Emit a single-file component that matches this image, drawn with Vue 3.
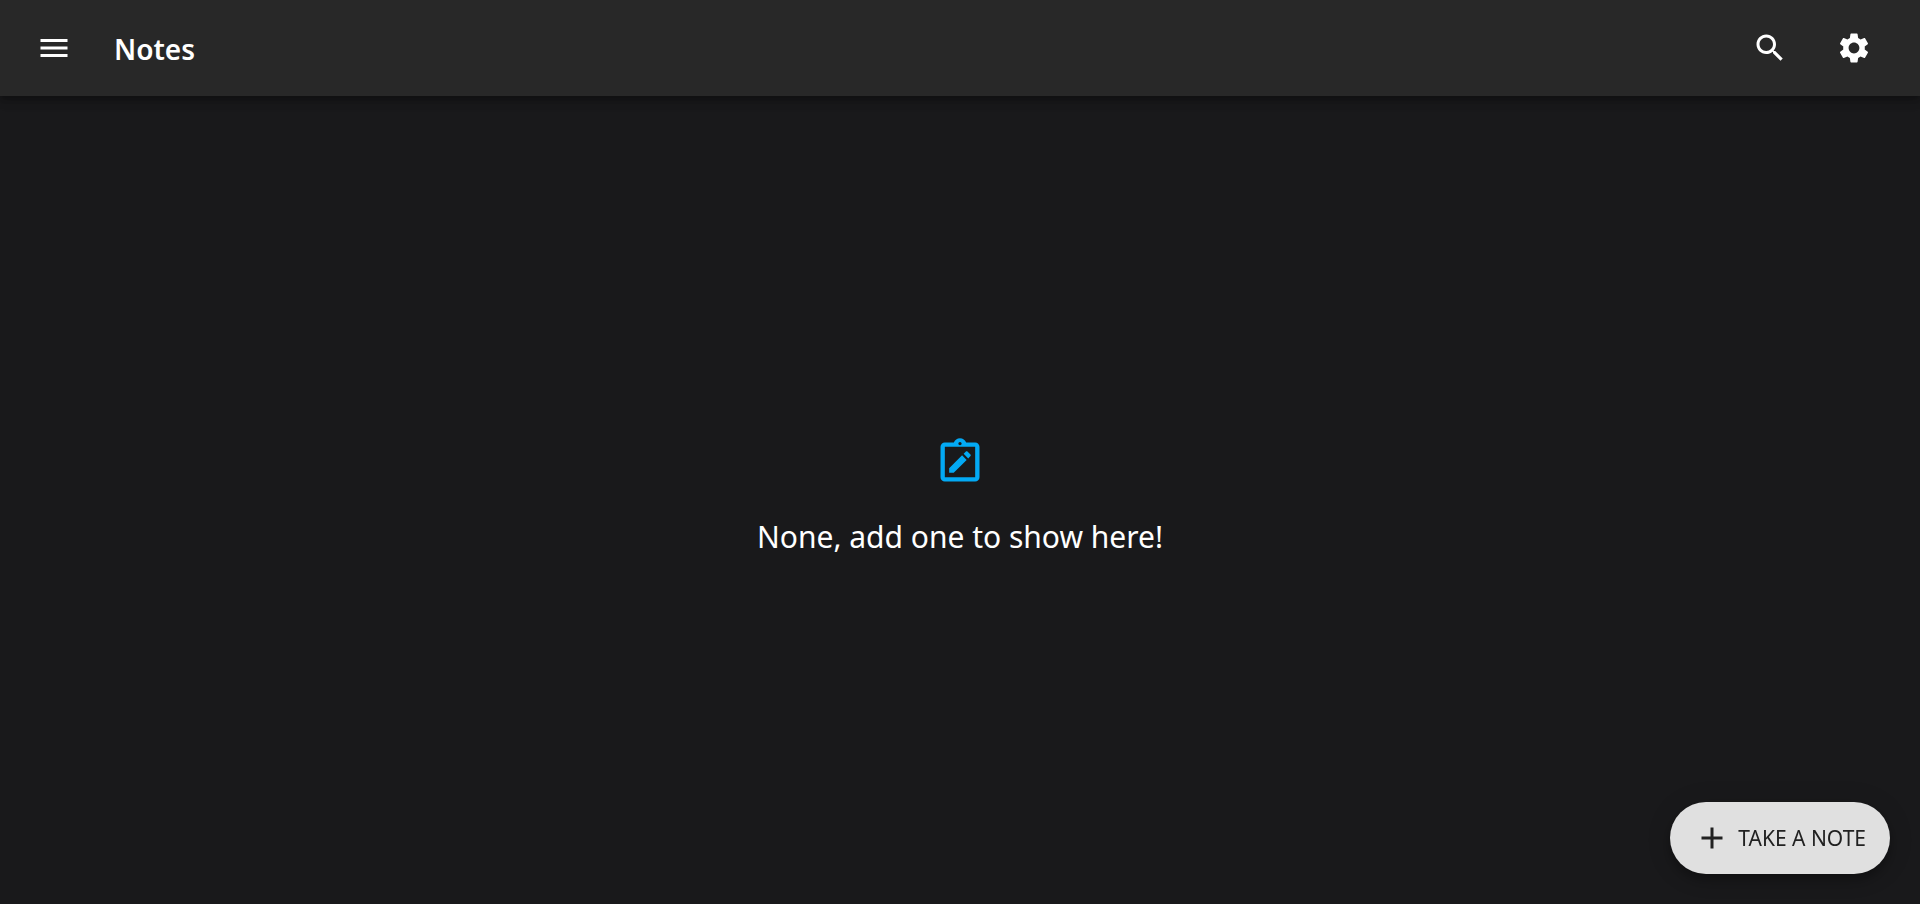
<script setup>
const title = 'Notes'
const emptyMessage = 'None, add one to show here!'
</script>

<template>
  <div class="page">
    <header class="bar">
      <button class="icon-button" type="button" aria-label="Menu">
        <svg class="icon" viewBox="0 0 24 24" aria-hidden="true"><path d="M3 18h18v-2H3v2zm0-5h18v-2H3v2zm0-7v2h18V6H3z" /></svg>
      </button>
      <h1 class="title">{{ title }}</h1>
      <div class="actions">
        <button class="icon-button" type="button" aria-label="Search">
          <svg class="icon" viewBox="0 0 24 24" aria-hidden="true"><path d="M15.5 14h-.79l-.28-.27C15.41 12.59 16 11.11 16 9.5 16 5.91 13.09 3 9.5 3S3 5.91 3 9.5 5.91 16 9.5 16c1.61 0 3.09-.59 4.23-1.57l.27.28v.79l5 4.99L20.49 19l-4.99-5zm-6 0C7.01 14 5 11.99 5 9.5S7.01 5 9.5 5 14 7.01 14 9.5 11.99 14 9.5 14z" /></svg>
        </button>
        <button class="icon-button" type="button" aria-label="Settings">
          <svg class="icon" viewBox="0 0 24 24" aria-hidden="true"><path d="M19.14,12.94c0.04-0.3,0.06-0.61,0.06-0.94c0-0.32-0.02-0.64-0.07-0.94l2.03-1.58c0.18-0.14,0.23-0.41,0.12-0.61 l-1.92-3.32c-0.12-0.22-0.37-0.29-0.59-0.22l-2.39,0.96c-0.5-0.38-1.03-0.7-1.62-0.94L14.4,2.81c-0.04-0.24-0.24-0.41-0.48-0.41 h-3.84c-0.24,0-0.43,0.17-0.47,0.41L9.25,5.35C8.66,5.59,8.12,5.92,7.63,6.29L5.24,5.33c-0.22-0.08-0.47,0-0.59,0.22L2.74,8.87 C2.62,9.08,2.66,9.34,2.86,9.48l2.03,1.58C4.84,11.36,4.8,11.69,4.8,12s0.02,0.64,0.07,0.94l-2.03,1.58 c-0.18,0.14-0.23,0.41-0.12,0.61l1.92,3.32c0.12,0.22,0.37,0.29,0.59,0.22l2.39-0.96c0.5,0.38,1.03,0.7,1.62,0.94l0.36,2.54 c0.05,0.24,0.24,0.41,0.48,0.41h3.84c0.24,0,0.44-0.17,0.47-0.41l0.36-2.54c0.59-0.24,1.13-0.56,1.62-0.94l2.39,0.96 c0.22,0.08,0.47,0,0.59-0.22l1.92-3.32c0.12-0.22,0.07-0.47-0.12-0.61L19.14,12.94z M12,15.6c-1.98,0-3.6-1.62-3.6-3.6 s1.62-3.6,3.6-3.6s3.6,1.62,3.6,3.6S13.98,15.6,12,15.6z" /></svg>
        </button>
      </div>
    </header>

    <main class="content">
      <svg class="empty-icon" viewBox="0 0 24 24" aria-hidden="true">
        <path fill-rule="evenodd" d="M19 3h-4.18C14.4 1.84 13.3 1 12 1s-2.4.84-2.82 2H5c-1.1 0-2 .9-2 2v14c0 1.1.9 2 2 2h14c1.1 0 2-.9 2-2V5c0-1.1-.9-2-2-2zm-7-.25c.41 0 .75.34.75.75s-.34.75-.75.75-.75-.34-.75-.75.34-.75.75-.75zM19 19H5V5h14v14z" />
        <path d="m15.08 11.03-2.12-2.12L7 14.86V17h2.1zm1.77-1.76c.2-.2.2-.51 0-.71l-1.41-1.41c-.2-.2-.51-.2-.71 0l-1.06 1.06 2.12 2.12z" />
      </svg>
      <p class="message">{{ emptyMessage }}</p>
    </main>

    <button class="fab" type="button">
      <svg class="icon" viewBox="0 0 24 24" aria-hidden="true"><path d="M19 13h-6v6h-2v-6H5v-2h6V5h2v6h6v2z" /></svg>
      <span>TAKE A NOTE</span>
    </button>
  </div>
</template>

<style>
body {
  margin: 0;
  background: #19191b;
}
</style>

<style scoped>
.page {
  display: flex;
  flex-direction: column;
  min-height: 100vh;
  background: #19191b;
  color: #fff;
  font-family: "Segoe UI", "Noto Sans", "Open Sans", sans-serif;
}

.bar {
  display: flex;
  align-items: center;
  box-sizing: border-box;
  height: 96px;
  padding: 0 30px 0 18px;
  background: #282828;
  box-shadow: 0 3px 6px -1px rgba(0, 0, 0, 0.2), 0 6px 8px rgba(0, 0, 0, 0.14), 0 2px 15px rgba(0, 0, 0, 0.12);
}

.icon-button {
  display: flex;
  padding: 18px;
  border: 0;
  border-radius: 50%;
  background: transparent;
  color: inherit;
  cursor: pointer;
}

.icon {
  width: 36px;
  height: 36px;
  fill: currentColor;
}

.title {
  flex: 1;
  margin: 0;
  padding: 2px 0 0 24px;
  font-size: 28px;
  font-weight: 600;
  line-height: 48px;
}

.actions {
  display: flex;
  gap: 12px;
}

.content {
  flex: 1;
  display: flex;
  flex-direction: column;
  align-items: center;
  justify-content: center;
  gap: 24px;
  padding-bottom: 2px;
}

.empty-icon {
  width: 52px;
  height: 52px;
  fill: #03a9f4;
}

.message {
  margin: 0;
  font-size: 30px;
  line-height: 50px;
}

.fab {
  position: fixed;
  right: 30px;
  bottom: 30px;
  display: flex;
  align-items: center;
  gap: 8px;
  height: 72px;
  padding: 0 24px;
  border: 0;
  border-radius: 36px;
  background: #e0e0e0;
  color: #212121;
  font-family: inherit;
  font-size: 21px;
  line-height: 36px;
  cursor: pointer;
  box-shadow: 0 4px 8px -1px rgba(0, 0, 0, 0.2), 0 9px 15px rgba(0, 0, 0, 0.14), 0 2px 27px rgba(0, 0, 0, 0.12);
}
</style>
